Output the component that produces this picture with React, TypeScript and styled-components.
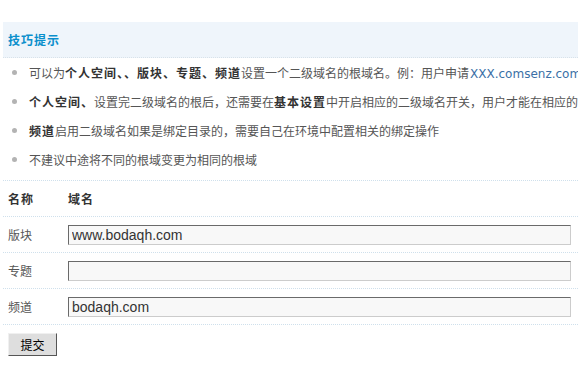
import React from "react";
import styled, { createGlobalStyle } from "styled-components";

const Global = createGlobalStyle`
  html, body { margin: 0; padding: 0; background: #fff; }
  body {
    font-family: "Noto Sans CJK SC", "Liberation Sans", sans-serif;
    font-size: 12px;
    color: #555;
    overflow: hidden;
  }
`;

const Page = styled.div`
  padding-top: 22px;
  width: 578px;
  overflow: hidden;
`;

const Tips = styled.div`
  margin-left: 3px;
  border-bottom: 1px dotted #cfe0ec;
  padding-bottom: 6px;
`;

const TipsHead = styled.div`
  height: 35px;
  display: flex;
  align-items: center;
  padding-left: 5px;
  background: #eff5fb;
  border-bottom: 1px dotted #d8e2ea;
  color: #0a8fcc;
  font-weight: bold;
  letter-spacing: 1px;
`;

const TipList = styled.ul`
  list-style: none;
  margin: 0;
  padding: 0;
`;

const Tip = styled.li`
  height: 29px;
  display: flex;
  align-items: center;
  white-space: nowrap;
  padding-left: 9px;
  gap: 12px;
  &::before {
    content: "";
    flex: none;
    width: 5px;
    height: 5px;
    border-radius: 50%;
    background: #b3b3b3;
  }
`;

const B = styled.b`
  color: #333;
  letter-spacing: 1px;
`;

const Link = styled.span`
  color: #3a6fa6;
  font-family: "DejaVu Sans", sans-serif;
  font-size: 12px;
  margin-left: 1px;
`;

const Table = styled.div`
  margin-left: 3px;
`;

const Row = styled.div`
  height: 35px;
  display: grid;
  grid-template-columns: 60px 503px;
  align-items: center;
  padding-left: 5px;
  border-bottom: 1px dotted #cfe0ec;
`;

const HeadCell = styled.div`
  font-weight: bold;
  color: #333;
  letter-spacing: 1px;
`;

const Label = styled.div`
  color: #555;
`;

const Field = styled.input`
  box-sizing: border-box;
  width: 503px;
  height: 20px;
  margin: 0;
  padding: 0 3px;
  background: #f8f8f8;
  border-style: solid;
  border-width: 1px;
  border-color: #6a6a6a #cccccc #cccccc #6a6a6a;
  font-family: "Liberation Sans", sans-serif;
  font-size: 14px;
  color: #333;
  outline: none;
`;

const Actions = styled.div`
  padding: 8px 0 0 8px;
`;

const Submit = styled.button`
  width: 49px;
  height: 23px;
  margin: 0;
  padding: 0;
  background: #dedede;
  border-style: solid;
  border-width: 1px;
  border-color: #f0f0f0 #555 #555 #f0f0f0;
  font-family: "Noto Sans CJK SC", sans-serif;
  font-size: 12px;
  color: #000;
`;

const rows = [
  { name: "版块", value: "www.bodaqh.com" },
  { name: "专题", value: "" },
  { name: "频道", value: "bodaqh.com" },
];

export default function App() {
  return (
    <Page>
      <Global />
      <Tips>
        <TipsHead>技巧提示</TipsHead>
        <TipList>
          <Tip>
            <span>
              可以为<B>个人空间、、版块、专题、频道</B>设置一个二级域名的根域名。例：用户申请
              <Link>XXX.comsenz.com</Link>
            </span>
          </Tip>
          <Tip>
            <span>
              <B>个人空间、</B>设置完二级域名的根后，还需要在<B>基本设置</B>
              中开启相应的二级域名开关，用户才能在相应的功能中设置二级域名
            </span>
          </Tip>
          <Tip>
            <span>
              <B>频道</B>启用二级域名如果是绑定目录的，需要自己在环境中配置相关的绑定操作
            </span>
          </Tip>
          <Tip>
            <span>不建议中途将不同的根域变更为相同的根域</span>
          </Tip>
        </TipList>
      </Tips>
      <Table>
        <Row>
          <HeadCell>名称</HeadCell>
          <HeadCell>域名</HeadCell>
        </Row>
        {rows.map((r) => (
          <Row key={r.name}>
            <Label>{r.name}</Label>
            <Field defaultValue={r.value} />
          </Row>
        ))}
      </Table>
      <Actions>
        <Submit>提交</Submit>
      </Actions>
    </Page>
  );
}
